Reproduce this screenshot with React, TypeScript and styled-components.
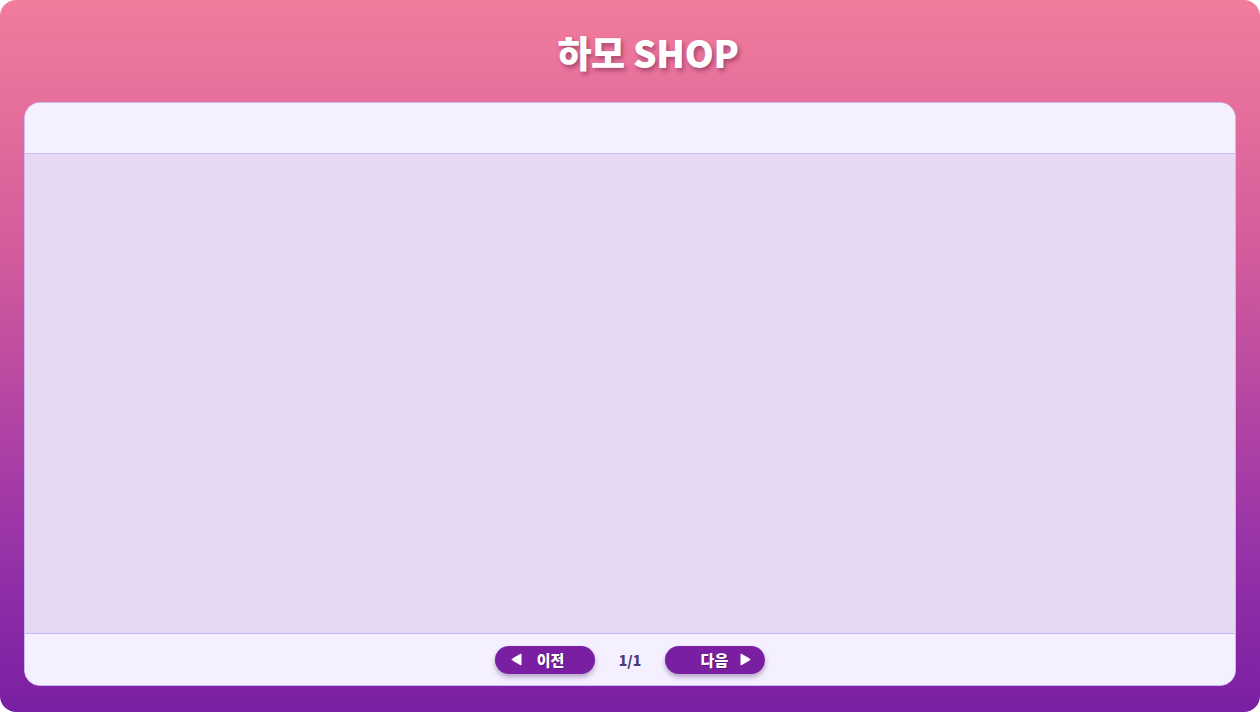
import React from "react";
import styled, { createGlobalStyle } from "styled-components";

const Global = createGlobalStyle`
  html, body { margin: 0; padding: 0; background: #ffffff; }
  body { font-family: "Noto Sans CJK KR", "Noto Sans", sans-serif; }
  * { box-sizing: border-box; }
`;

const Frame = styled.div`
  width: 1260px;
  height: 712px;
  border-radius: 16px;
  background: linear-gradient(180deg, #f27c9c 0%, #d45c9c 35%, #9a34a8 75%, #7a1fa3 100%);
  display: flex;
  flex-direction: column;
  padding: 0 24px 26px;
  overflow: hidden;
`;

const TitleBar = styled.div`
  height: 102px;
  display: flex;
  align-items: center;
  justify-content: center;
  padding: 2px 0 0 36px;
`;

const Title = styled.h1`
  margin: 0;
  font-family: "Noto Sans CJK KR", "Noto Sans", sans-serif;
  font-size: 37px;
  line-height: 1;
  font-weight: 900;
  color: #ffffff;
  letter-spacing: -0.3px;
  text-shadow: 2px 3px 4px rgba(90, 20, 60, 0.45);
`;

const Panel = styled.div`
  flex: 1;
  display: flex;
  flex-direction: column;
  border: 1px solid #c8b9f8;
  border-radius: 16px;
  overflow: hidden;
  background: #f5f0ff;
`;

const PanelHeader = styled.div`
  height: 51px;
  background: #f5f0ff;
  border-bottom: 1px solid #c8b9f8;
`;

const PanelBody = styled.div`
  flex: 1;
  background: #e6d9f1;
`;

const PanelFooter = styled.div`
  height: 52px;
  background: #f5f0ff;
  border-top: 1px solid #c8b9f8;
  display: flex;
  align-items: center;
  justify-content: center;
  gap: 24px;
`;

const NavButton = styled.button<{ $align: "start" | "end" }>`
  width: 100px;
  height: 28px;
  border: none;
  border-radius: 14px;
  background: #7b1fa2;
  color: #ffffff;
  font-family: "Noto Sans CJK KR", "Noto Sans", sans-serif;
  font-size: 15px;
  line-height: 1;
  font-weight: 900;
  display: flex;
  align-items: center;
  justify-content: ${(p) => (p.$align === "start" ? "flex-start" : "flex-end")};
  gap: ${(p) => (p.$align === "start" ? "15px" : "12px")};
  padding: 0 14px 0 16px;
  box-shadow: 0 3px 5px rgba(60, 20, 90, 0.35);
  text-shadow: 1px 1px 1px rgba(40, 0, 60, 0.4);
  cursor: pointer;
`;

const PageInfo = styled.span`
  font-family: "Noto Sans CJK KR", "Noto Sans", sans-serif;
  font-size: 14px;
  font-weight: 900;
  color: #4a3a78;
  min-width: 22px;
  text-align: center;
`;

const Tri = ({ dir }: { dir: "left" | "right" }) => (
  <svg width="11" height="13" viewBox="0 0 11 13">
    {dir === "left" ? (
      <path d="M10 1 L10 12 L1.5 7.1 Q0.6 6.5 1.5 5.9 Z" fill="#fff" stroke="#fff" strokeLinejoin="round" strokeWidth="1" />
    ) : (
      <path d="M1 1 L1 12 L9.5 7.1 Q10.4 6.5 9.5 5.9 Z" fill="#fff" stroke="#fff" strokeLinejoin="round" strokeWidth="1" />
    )}
  </svg>
);

export default function App() {
  return (
    <>
      <Global />
      <Frame>
        <TitleBar>
          <Title>하모 SHOP</Title>
        </TitleBar>
        <Panel>
          <PanelHeader />
          <PanelBody />
          <PanelFooter>
            <NavButton $align="start">
              <Tri dir="left" />
              <span>이전</span>
            </NavButton>
            <PageInfo>1/1</PageInfo>
            <NavButton $align="end">
              <span>다음</span>
              <Tri dir="right" />
            </NavButton>
          </PanelFooter>
        </Panel>
      </Frame>
    </>
  );
}
